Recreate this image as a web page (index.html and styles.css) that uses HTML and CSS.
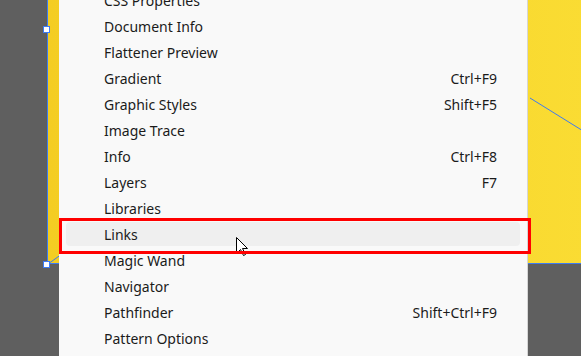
FILE: index.html
```html
<!DOCTYPE html>
<html>
<head>
    <meta charset="UTF-8">
    <title>Window menu</title>
    <link rel="stylesheet" href="styles.css">
</head>
<body>
    <div class="workspace">
        <div class="artboard">
            <svg class="art-line" viewBox="0 0 534 264" width="534" height="264">
                <line x1="482" y1="98" x2="540" y2="134" stroke="#3d7bf2" stroke-width="1"/>
                <line x1="0" y1="264" x2="14" y2="254" stroke="#3d7bf2" stroke-width="1"/>
            </svg>
        </div>
        <span class="handle handle-top"></span>
        <span class="handle handle-bottom"></span>

        <div class="menu">
            <div class="item"><span>CSS Properties</span><span></span></div>
            <div class="item"><span>Document Info</span><span></span></div>
            <div class="item"><span>Flattener Preview</span><span></span></div>
            <div class="item"><span>Gradient</span><span>Ctrl+F9</span></div>
            <div class="item"><span>Graphic Styles</span><span>Shift+F5</span></div>
            <div class="item"><span>Image Trace</span><span></span></div>
            <div class="item"><span>Info</span><span>Ctrl+F8</span></div>
            <div class="item"><span>Layers</span><span>F7</span></div>
            <div class="item"><span>Libraries</span><span></span></div>
            <div class="item hover"><span>Links</span><span></span></div>
            <div class="item"><span>Magic Wand</span><span></span></div>
            <div class="item"><span>Navigator</span><span></span></div>
            <div class="item"><span>Pathfinder</span><span>Shift+Ctrl+F9</span></div>
            <div class="item"><span>Pattern Options</span><span></span></div>
        </div>

        <svg class="cursor" viewBox="0 0 12 19" width="12" height="19">
            <path d="M0.5 0.5 L0.5 16.5 L4.5 12.5 L7.5 18.5 L9.5 17.5 L6.5 11.5 L11.5 11.5 Z" fill="#fff" stroke="#000" stroke-width="1"/>
        </svg>

        <div class="callout"></div>
    </div>
</body>
</html>
```

FILE: styles.css
```css
body {
    margin: 0;
    background-color: #5f5f5f;
    font-family: "Segoe UI", "Noto Sans", sans-serif;
}

.workspace {
    position: relative;
    width: 581px;
    height: 356px;
    overflow: hidden;
    background-color: #5f5f5f;
}

.artboard {
    position: absolute;
    left: 47px;
    top: -10px;
    width: 540px;
    height: 273px;
    background: linear-gradient(90deg, #f4cd22, #fadc33);
    border-left: 1px solid #3d7bf2;
    border-bottom: 1px solid #3d7bf2;
}

.art-line {
    position: absolute;
    left: 0;
    top: 10px;
    overflow: visible;
}

.handle {
    position: absolute;
    left: 43px;
    width: 5px;
    height: 5px;
    background-color: #fff;
    border: 1px solid #3d7bf2;
}

.handle-top {
    top: 26px;
}

.handle-bottom {
    top: 261px;
}

.menu {
    position: absolute;
    left: 59px;
    top: -13px;
    width: 469px;
    height: 380px;
    display: flex;
    flex-direction: column;
    gap: 2px;
    padding: 1px 7px;
    box-sizing: border-box;
    background-color: #f9f9f9;
    border-right: 1px solid #d6d6d6;
}

.item {
    display: flex;
    justify-content: space-between;
    align-items: center;
    flex: none;
    height: 24px;
    padding: 0 23px 0 38px;
    font-size: 14px;
    color: #1b1b1b;
    border-radius: 4px;
}

.item.hover {
    background-color: #efefef;
}

.cursor {
    position: absolute;
    left: 236px;
    top: 237px;
}

.callout {
    position: absolute;
    left: 59px;
    top: 218px;
    width: 472px;
    height: 36px;
    box-sizing: border-box;
    border: 3px solid #ff0000;
}
```
